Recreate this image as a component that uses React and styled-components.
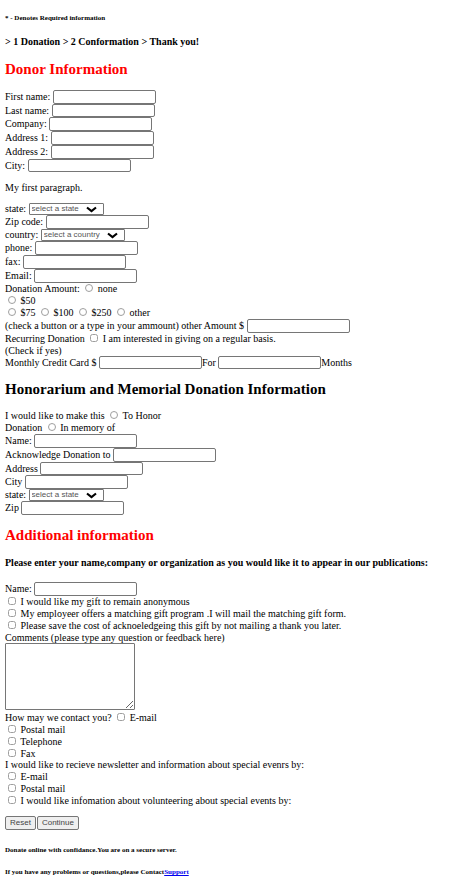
import React from "react";
import styled, { createGlobalStyle } from "styled-components";

const GlobalStyle = createGlobalStyle`
  body {
    margin: 0;
    background: #fff;
    color: #000;
    font-family: "Liberation Serif", "Times New Roman", serif;
    font-size: 10px;
  }
`;

const Page = styled.form`
  padding: 13px 5px 5px;
`;

const Note = styled.h6`
  margin: ${(p) => p.$space || "0"};
  font-size: 7px;
  line-height: 10px;
`;

const Steps = styled.h4`
  margin: 12px 0 0;
  font-size: 10px;
  line-height: 14px;
`;

const Title = styled.h2`
  margin: 11px 0 12px;
  font-size: 15px;
  line-height: 18px;
  color: ${(p) => (p.$accent ? "#f00" : "#000")};
`;

const Lead = styled.h4`
  margin: 0 0 12px;
  font-size: 10px;
  line-height: 14px;
`;

const Paragraph = styled.p`
  margin: 9px 0 8px;
  line-height: 14px;
`;

const Row = styled.div`
  height: ${(p) => p.$h || 12}px;
  line-height: ${(p) => p.$h || 12}px;
  white-space: nowrap;
`;

const TextInput = styled.input`
  box-sizing: border-box;
  width: 103px;
  height: 100%;
  margin: 0;
  padding: 0 2px;
  border: 1px solid #767676;
  border-radius: 2px;
  background: #fff;
  font: 9px "Liberation Sans", Arial, sans-serif;
  vertical-align: top;
`;

const SelectBox = styled.span`
  display: inline-grid;
  height: 12px;
  vertical-align: top;
  align-items: center;
`;

const Select = styled.select`
  grid-area: 1 / 1;
  appearance: none;
  box-sizing: border-box;
  height: 12px;
  margin: 0;
  padding: 0 23px 0 2px;
  border: 1px solid #767676;
  border-radius: 1px;
  background: #fff;
  color: #555;
  font: 8px/10px "Liberation Sans", Arial, sans-serif;
`;

const Chevron = styled.svg`
  grid-area: 1 / 1;
  justify-self: end;
  width: 11px;
  height: 7px;
  margin-right: 7px;
  pointer-events: none;
`;

const Tick = styled.input`
  width: 8px;
  height: 8px;
  margin: 1px 2px 0 3px;
  opacity: 0.7;
  vertical-align: top;
`;

const Comments = styled.textarea`
  display: block;
  box-sizing: border-box;
  width: 130px;
  height: 67px;
  margin: 0 0 2px;
  border: 1px solid #767676;
  border-radius: 1px;
  font: 9px "Liberation Mono", monospace;
`;

const Buttons = styled.div`
  display: flex;
  gap: 1px;
  margin: 9px 0 15px;
`;

const Button = styled.button`
  height: 14px;
  padding: 0 4px;
  border: 1px solid #767676;
  border-radius: 2px;
  background: #efefef;
  color: #444;
  font: 8px/12px "Liberation Sans", Arial, sans-serif;
`;

const Link = styled.a`
  color: #00e;

  &:visited {
    color: #00e;
  }
`;

function Field({ id, label, h = 14 }) {
  return (
    <Row $h={h}>
      <label htmlFor={id}>{label}</label> <TextInput id={id} type="text" />
    </Row>
  );
}

function SelectField({ id, label, option, h = 12 }) {
  return (
    <Row $h={h}>
      <label htmlFor={id}>{label}</label>{" "}
      <SelectBox>
        <Select id={id}>
          <option>{option}</option>
        </Select>
        <Chevron viewBox="0 0 11 7" aria-hidden="true">
          <path d="M1 1.5 L5.5 5 L10 1.5" fill="none" stroke="#000" strokeWidth="2.2" />
        </Chevron>
      </SelectBox>
    </Row>
  );
}

function Choice({ type = "checkbox", name, children }) {
  return (
    <label>
      <Tick type={type} name={name} /> {children}
    </label>
  );
}

export default function App() {
  return (
    <>
      <GlobalStyle />
      <Page onSubmit={(e) => e.preventDefault()}>
        <Note>* - Denotes Required information</Note>
        <Steps>&gt; 1 Donation &gt; 2 Conformation &gt; Thank you!</Steps>

        <Title $accent>Donor Information</Title>
        <Field id="first" label="First name:" />
        <Field id="last" label="Last name:" h={13} />
        <Field id="company" label="Company:" />
        <Field id="address1" label="Address 1:" />
        <Field id="address2" label="Address 2:" />
        <Field id="city" label="City:" h={13} />
        <Paragraph>My first paragraph.</Paragraph>
        <SelectField id="state" label="state:" option="select a state" />
        <Field id="zip" label="Zip code:" />
        <SelectField id="country" label="country:" option="select a country" />
        <Field id="phone" label="phone:" />
        <Field id="fax" label="fax:" />
        <Field id="email" label="Email:" />
        <Row>
          Donation Amount: <Choice type="radio" name="amount">none</Choice>
        </Row>
        <Row>
          <Choice type="radio" name="amount">$50</Choice>
        </Row>
        <Row>
          <Choice type="radio" name="amount">$75</Choice>{" "}
          <Choice type="radio" name="amount">$100</Choice>{" "}
          <Choice type="radio" name="amount">$250</Choice>{" "}
          <Choice type="radio" name="amount">other</Choice>
        </Row>
        <Field id="other" label="(check a button or a type in your ammount) other Amount $" />
        <Row>
          Recurring Donation <Choice name="recurring">I am interested in giving on a regular basis.</Choice>
        </Row>
        <Row $h={11}>(Check if yes)</Row>
        <Row $h={13}>
          <label htmlFor="monthly">Monthly Credit Card $</label> <TextInput id="monthly" type="text" />
          <label htmlFor="months">For</label> <TextInput id="months" type="text" />
          Months
        </Row>

        <Title>Honorarium and Memorial Donation Information</Title>
        <Row>
          I would like to make this <Choice type="radio" name="tribute">To Honor</Choice>
        </Row>
        <Row>
          Donation <Choice type="radio" name="tribute">In memory of</Choice>
        </Row>
        <Field id="honorName" label="Name:" />
        <Field id="acknowledge" label="Acknowledge Donation to" />
        <Field id="honorAddress" label="Address" h={13} />
        <Field id="honorCity" label="City" />
        <SelectField id="honorState" label="state:" option="select a state" />
        <Field id="honorZip" label="Zip" />

        <Title $accent>Additional information</Title>
        <Lead>Please enter your name,company or organization as you would like it to appear in our publications:</Lead>
        <Field id="publicName" label="Name:" />
        <Row>
          <Choice name="anonymous">I would like my gift to remain anonymous</Choice>
        </Row>
        <Row>
          <Choice name="matching">My employeer offers a matching gift program .I will mail the matching gift form.</Choice>
        </Row>
        <Row>
          <Choice name="noThanks">Please save the cost of acknoeledgeing this gift by not mailing a thank you later.</Choice>
        </Row>
        <Row $h={11}>
          <label htmlFor="comments">Comments (please type any question or feedback here)</label>
        </Row>
        <Comments id="comments" />
        <Row>
          How may we contact you? <Choice name="contact">E-mail</Choice>
        </Row>
        <Row>
          <Choice name="contact">Postal mail</Choice>
        </Row>
        <Row>
          <Choice name="contact">Telephone</Choice>
        </Row>
        <Row $h={11}>
          <Choice name="contact">Fax</Choice>
        </Row>
        <Row>I would like to recieve newsletter and information about special evenrs by:</Row>
        <Row>
          <Choice name="news">E-mail</Choice>
        </Row>
        <Row>
          <Choice name="news">Postal mail</Choice>
        </Row>
        <Row>
          <Choice name="news">I would like infomation about volunteering about special events by:</Choice>
        </Row>

        <Buttons>
          <Button type="reset">Reset</Button>
          <Button type="submit">Continue</Button>
        </Buttons>
        <Note>Donate online with confidance.You are on a secure server.</Note>
        <Note $space="12px 0 0">
          If you have any problems or questions,please Contact<Link href="#support">Support</Link>
        </Note>
      </Page>
    </>
  );
}
